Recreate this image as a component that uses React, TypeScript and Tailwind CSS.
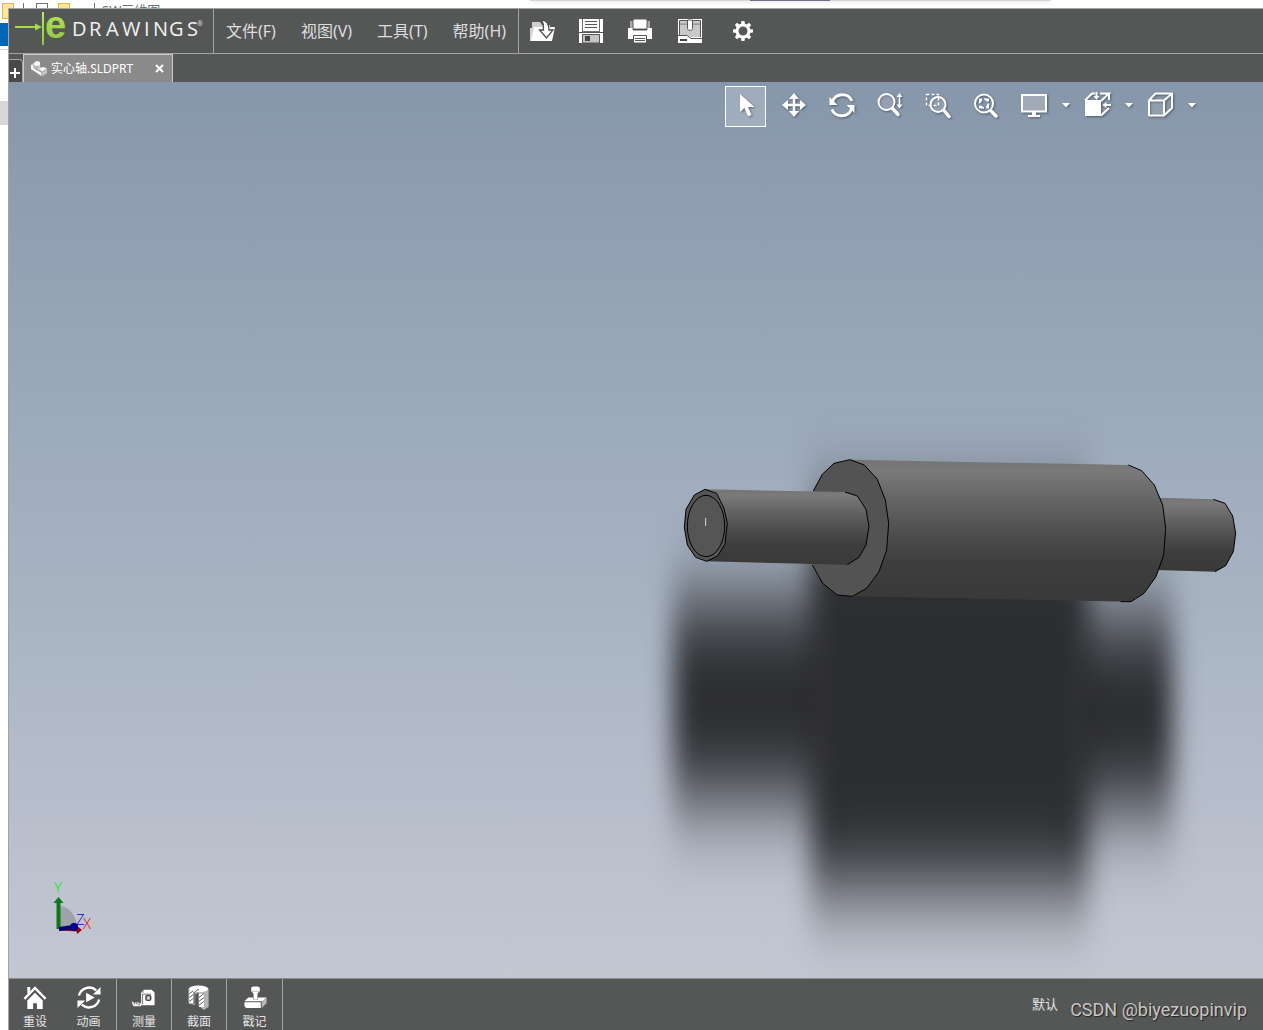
import React from 'react';
import clsx from 'clsx';

type IconProps = { className?: string };

/* ---------- header icons ---------- */

const OpenIcon = () => (
  <svg viewBox="0 0 26 24" className="w-[26px] h-6">
    <path d="M2 18V3h8l2 3h8v4" fill="#cfcfcf" />
    <path d="M1 22 4 8h21l-3 14z" fill="#fff" />
    <path d="M1 22V9" stroke="#fff" strokeWidth="1.500" />
    <path d="M11 1c6 0 8 4 8 10h4l-6.500 8-7-8h4c0-5 0-7-2.500-10z" fill="#fff" stroke="#4b4d4c" strokeWidth="1.300" />
  </svg>
);

const SaveIcon = () => (
  <svg viewBox="0 0 24 24" className="w-6 h-6">
    <path d="M0 0h24v24H0z" fill="#fff" />
    <path d="M3.500 0v12M20.500 0v12M3 12.500h18" stroke="#6c6e6d" strokeWidth="1" fill="none" />
    <path d="M6 2.500h12M6 5.500h12M6 8.500h12" stroke="#555756" strokeWidth="1" />
    <path d="M3.500 15.500h17V24h-17z" fill="#c4c4c4" stroke="#555756" strokeWidth="1" />
    <path d="M6 17h5v5H6z" fill="#444645" />
    <path d="M0 13.500h24" stroke="#555756" strokeWidth="1" />
  </svg>
);

const PrintIcon = () => (
  <svg viewBox="0 0 24 24" className="w-6 h-6">
    <path d="M2 2h20v8H2z" fill="#a9aaaa" />
    <path d="M5 0h14v10H5z" fill="#fff" stroke="#555756" strokeWidth="1" />
    <path d="M0 9h5v2h14V9h5v11H0z" fill="#fff" />
    <path d="M5 9.500v1.500h14V9.500" fill="none" stroke="#555756" />
    <path d="M5.500 16.500h13V24h-13z" fill="#fff" stroke="#555756" />
    <path d="M7 19.500h10M7 21.500h10" stroke="#555756" strokeWidth="1" />
  </svg>
);

const PackageIcon = () => (
  <svg viewBox="0 0 24 24" className="w-6 h-6">
    <path d="M0 0h24v24H0z" fill="#fff" />
    <path d="M2 2h20v2H2zM2 5.500h20V18H12l-3-2H2z" fill="#c8c8c8" />
    <path d="M1.500 17V1.500h21V18M2 5h20M0 16.500h9l4 3h11" fill="none" stroke="#555756" />
    <path d="M9.500 1v8.500c0 2.500 5 2.500 5 0V1z" fill="#fff" stroke="#555756" />
    <path d="M2 21h7" stroke="#444645" strokeWidth="2" />
  </svg>
);

const GearIcon = () => (
  <svg viewBox="0 0 22 22" className="w-[22px] h-[22px]">
    <circle cx="11" cy="11" r="6" fill="none" stroke="#fff" strokeWidth="3" />
    {[0, 45, 90, 135, 180, 225, 270, 315].map((angle) => (
      <path key={angle} d="M9.500 1h3l.5 4H9z" fill="#fff" transform={`rotate(${angle} 11 11)`} />
    ))}
  </svg>
);

/* ---------- view toolbar icons ---------- */

const CursorIcon = ({ className }: IconProps) => (
  <svg viewBox="0 0 28 28" className={className}>
    <path d="M8 3v18l4.500-4 3.500 8.500 3.500-1.500-3.500-8h6.500z" fill="#fff" />
  </svg>
);

const PanIcon = ({ className }: IconProps) => (
  <svg viewBox="0 0 28 28" className={className}>
    <path d="M14 5v18M5 14h18" stroke="#fff" strokeWidth="2.500" />
    <path d="M14 2l5 6H9zM14 26l5-6H9zM2 14l6-5v10zM26 14l-6-5v10z" fill="#fff" />
  </svg>
);

const RotateIcon = ({ className }: IconProps) => (
  <svg viewBox="0 0 28 28" className={className}>
    <path d="M4.500 10.500a10.500 10.500 0 0 1 19.500-.5M23.500 18A10.500 10.500 0 0 1 4 18.500" fill="none" stroke="#fff" strokeWidth="3" />
    <path d="M1.500 6v8h8zM26.500 22v-8h-8z" fill="#fff" />
  </svg>
);

const ZoomIcon = ({ className }: IconProps) => (
  <svg viewBox="0 0 28 28" className={className}>
    <circle cx="10.500" cy="11" r="8" fill="#ffffff2b" stroke="#fff" strokeWidth="2" />
    <path d="M16.500 17.500l5.500 6" stroke="#fff" strokeWidth="3.500" strokeLinecap="round" />
    <path d="M23.500 4v11" stroke="#fff" strokeWidth="1.500" />
    <path d="M23.500 2l3 4h-6zM23.500 17.500l3-4h-6z" fill="#fff" />
  </svg>
);

const ZoomAreaIcon = ({ className }: IconProps) => (
  <svg viewBox="0 0 28 28" className={className}>
    <path d="M2.500 3.500h12v11h-12z" fill="none" stroke="#fff" strokeWidth="1.500" strokeDasharray="3 2" />
    <circle cx="14" cy="13.500" r="7.500" fill="#ffffff2b" stroke="#fff" strokeWidth="2" />
    <path d="M20 19.500l5 6" stroke="#fff" strokeWidth="3.500" strokeLinecap="round" />
  </svg>
);

const ZoomFitIcon = ({ className }: IconProps) => (
  <svg viewBox="0 0 28 28" className={className}>
    <circle cx="12" cy="12.500" r="9" fill="none" stroke="#fff" strokeWidth="2" />
    <circle cx="12" cy="12.500" r="4.500" fill="none" stroke="#fff" strokeWidth="2" strokeDasharray="4.500 2.500" />
    <path d="M7 10.500v-3h3zM17 14.500v3h-3zM14 7.500h3v3zM10 17.500H7v-3z" fill="#fff" />
    <path d="M19 20l5 5" stroke="#fff" strokeWidth="3.500" strokeLinecap="round" />
  </svg>
);

const MonitorIcon = ({ className }: IconProps) => (
  <svg viewBox="0 0 28 28" className={className}>
    <path d="M2 4h24v16.500H2z" fill="#a0a9b5" stroke="#fff" strokeWidth="2" />
    <path d="M12 21h4v3h4v2H8v-2h4z" fill="#fff" />
  </svg>
);

const OrientationIcon = ({ className }: IconProps) => (
  <svg viewBox="0 0 28 28" className={className}>
    <path d="M2 9h16v16H2z" fill="#fff" />
    <path d="M2 9.500l7-7h3M17 2.500h9l-8 7.500M26 2v7M26 17l-8 7.500" fill="none" stroke="#fff" strokeWidth="2" />
    <path d="M13.500 1v5M28 14h-5" stroke="#fff" strokeWidth="2" />
    <path d="M10.500 5h6l-3 4zM23.500 11v6l-4-3z" fill="#fff" />
  </svg>
);

const CubeIcon = ({ className }: IconProps) => (
  <svg viewBox="0 0 28 28" className={className}>
    <path d="M3 9.500h15v15H3zM3 9.500l6.500-7H26l-8 7M26 2.500V17l-8 7.500" fill="none" stroke="#fff" strokeWidth="2" strokeLinejoin="round" />
    <path d="M4 10.500h13v13H4z" fill="#ffffff20" />
  </svg>
);

/* ---------- bottom bar icons ---------- */

const HomeIcon = () => (
  <svg viewBox="0 0 26 26" className="w-[26px] h-[26px]">
    <path d="M5 2h3v5L5 9zM13 8l8 8v9h-6v-6h-4v6H5v-9z" fill="#fff" />
    <path d="M2 14.500L13 3l11 11.500" fill="none" stroke="#fff" strokeWidth="2.500" />
  </svg>
);

const AnimateIcon = () => (
  <svg viewBox="0 0 26 26" className="w-[26px] h-[26px]">
    <path d="M2.500 11A11 11 0 0 1 20.500 5.500M23.500 15A11 11 0 0 1 5.500 20.500" fill="none" stroke="#fff" strokeWidth="2.500" />
    <path d="M25 2v8h-8zM1 24v-8h8zM10 8l9 5-9 5z" fill="#fff" />
  </svg>
);

const MeasureIcon = () => (
  <svg viewBox="0 0 26 26" className="w-[26px] h-[26px]">
    <path d="M10 8l3-3h8l3 3v13H10z" fill="#fff" />
    <path d="M10 8l3-3v3z" fill="#bbb" />
    <path d="M11.500 20V9.500h9" fill="none" stroke="#777" />
    <rect x="15" y="11" width="5" height="5" rx="1.500" fill="#ccc" stroke="#444" strokeWidth="1.500" />
    <path d="M0 17l3 1.500 3-.5 4 1v3H2l-1-2z" fill="#eee" />
    <path d="M3 18v2M5.500 18v2M8 19v2" stroke="#666" />
  </svg>
);

const SectionIcon = () => (
  <svg viewBox="0 0 26 26" className="w-[26px] h-[26px]">
    <path d="M2 4l7-3h9l5 3v19l-5 3-6-5V8l-3 2v11l-7-2z" fill="#b5b5b5" />
    <ellipse cx="12.500" cy="4" rx="10" ry="3.500" fill="#fff" />
    <path d="M3 6h4v13H3zM13 9h5v14h-5z" fill="#fff" />
    <path d="M3 9l4-3M3 13l4-3M3 17l4-3M13 13l5-4M13 17l5-4M13 21l5-4" stroke="#555" />
    <path d="M8 20V8l3-3h2M12 22V8" fill="none" stroke="#555" />
  </svg>
);

const StampIcon = () => (
  <svg viewBox="0 0 26 26" className="w-[26px] h-[26px]">
    <path d="M9 3c0-2 9-2 9 0v3l-2.500 3v6h-4V9L9 6z" fill="#fff" />
    <path d="M9 6.500h9" stroke="#bbb" />
    <path d="M6 13h5v2h5v-2h9l-4 4H2z" fill="#fff" />
    <path d="M2 18h17v6H4l-2-2z" fill="#fff" />
    <path d="M20 18l5-5v6l-5 5z" fill="#b8b8b8" />
  </svg>
);

const PartIcon = () => (
  <svg viewBox="0 0 18 17" className="w-[18px] h-[17px]">
    <path d="M1 4.500l3-1.500 2-2 4 1v4.500l2 1.500 3-1 2 2v4l-5 3.500L1 9z" fill="#c9c9c9" />
    <path d="M4 3l3-2 3 1v3L7 6 4 5zM9 9l4-2 4 2-4 2.500zM1 5l3 1v2l8 5v3L1 9z" fill="#f6f6f6" />
    <path d="M4 5.500v2.500l8 4.500v4M7 6v3M12.500 12l4-2.500" fill="none" stroke="#8a8a8a" strokeWidth=".8" />
  </svg>
);

const Logo = () => (
  <svg viewBox="0 0 194 44" className="w-[194px] h-11 overflow-visible" role="img" aria-label="eDRAWINGS">
    <defs>
      <linearGradient id="logoGreen" x1="0" y1="0" x2="0" y2="1">
        <stop offset="0" stopColor="#b9ea5a" />
        <stop offset="1" stopColor="#8cc63f" />
      </linearGradient>
    </defs>
    <path d="M0 18h22" stroke="#a5d94e" strokeWidth="2" />
    <path d="M20 14.500l7 3.500-7 3.500z" fill="#a5d94e" />
    <path d="M27 3h2v33h-2z" fill="url(#logoGreen)" />
    <text x="30" y="29" className="font-['Liberation_Sans'] text-[38px] font-bold" fill="url(#logoGreen)">e</text>
    <text x="57 74 91 107 129 138 154 172" y="27" className="font-['Open_Sans'] text-[20px]" fill="#f2f2f2">DRAWINGS</text>
    <text x="182" y="17" className="font-['Open_Sans'] text-[7px]" fill="#e0e0e0">®</text>
  </svg>
);

/* ---------- 3D scene ---------- */

const Model = () => (
  <svg
    viewBox="9 82 1254 896"
    preserveAspectRatio="xMaxYMax slice"
    className="absolute inset-0 w-full h-full"
    aria-hidden="true"
  >
    <defs>
      <linearGradient id="steel" x1="0" y1="0" x2="0" y2="1">
        <stop offset="0" stopColor="#747474" />
        <stop offset=".08" stopColor="#7a7a7a" />
        <stop offset=".25" stopColor="#686868" />
        <stop offset=".5" stopColor="#505050" />
        <stop offset=".72" stopColor="#3e3e3e" />
        <stop offset="1" stopColor="#393939" />
      </linearGradient>
      <filter id="soft" filterUnits="userSpaceOnUse" x="500" y="200" width="900" height="900" colorInterpolationFilters="sRGB">
        <feGaussianBlur stdDeviation="13 44" />
      </filter>
      <filter id="softWide" filterUnits="userSpaceOnUse" x="500" y="200" width="900" height="900" colorInterpolationFilters="sRGB">
        <feGaussianBlur stdDeviation="13 44" />
      </filter>
    </defs>
    <g fill="#2c2d30">
      <path d="M673 602H840V798H673z" filter="url(#soft)" />
      <path d="M1060 616H1173V808H1060z" filter="url(#soft)" />
      <path d="M811 510H1088V888H811z" filter="url(#softWide)" />
    </g>
    {/* shaft outlines are drawn at three units per pixel */}
    <g transform="translate(670 440) scale(.33333)" stroke="#000" strokeWidth="3" fill="none" strokeLinejoin="round">
      <path d="M1465 173L1630 178 1665 190 1688 228 1697 280 1690 335 1667 377 1635 395 1460 390z" fill="url(#steel)" stroke="none" />
      <path d="M1630 178L1665 190 1688 228 1697 280 1690 335 1667 377 1635 395" />
      <path d="M540 59L1375 75 1415 92 1453 135 1478 195 1487 265 1481 345 1458 410 1422 460 1383 485 547 469z" fill="url(#steel)" stroke="none" />
      <path d="M1375 75L1415 92 1453 135 1478 195 1487 265 1481 345 1458 410 1422 460 1383 485H1352" />
      <path
        d="M430 153L457 103 492 70 540 59 583 75 622 118 646 180 656 250 650 330 627 395 590 445 547 469 502 465 458 430 427 375"
        fill="#535353"
      />
      <path d="M105 148L525 156 562 168 588 208 597 260 588 315 567 352 532 374 110 364z" fill="url(#steel)" stroke="none" />
      <path d="M525 156L562 168 588 208 597 260 588 315 567 352 532 374" />
      <path
        d="M105 148L140 160 162 205 172 250 165 312 143 348 110 364 77 352 52 315 43 262 48 208 73 165z"
        fill="#555"
      />
      <ellipse cx="108" cy="258" rx="56" ry="92" />
      <path d="M107 234v24" stroke="#ddd" />
    </g>
  </svg>
);

const Triad = () => (
  <svg viewBox="0 0 60 60" className="w-[60px] h-[60px]" role="img" aria-label="XYZ">
    <path d="M15 28a18 22 0 0 1 17 22H15z" fill="#9fa2a8" />
    <path d="M14 51l20 1" stroke="#8b0000" strokeWidth="3" />
    <path d="M31 47l6 5-5 4z" fill="#a00000" />
    <path d="M13.500 25v26" stroke="#0a7a14" strokeWidth="4" />
    <path d="M13.500 19l5 6h-10z" fill="#0a7a14" />
    <path d="M14 51l14-2" stroke="#00007a" strokeWidth="4" />
    <circle cx="29" cy="49" r="4" fill="#00008b" />
    <g className="font-['Open_Sans'] text-[15px] font-light">
      <text x="9" y="15" fill="#00f000">Y</text>
      <text x="38" y="51" fill="#f00000">X</text>
      <text x="31" y="47" fill="#0000f0">Z</text>
    </g>
  </svg>
);

/* ---------- data ---------- */

const menus = ['文件(F)', '视图(V)', '工具(T)', '帮助(H)'];

const fileActions = [
  { label: '打开', icon: OpenIcon, width: 'w-12' },
  { label: '保存', icon: SaveIcon, width: 'w-12' },
  { label: '打印', icon: PrintIcon, width: 'w-[50px]' },
  { label: '打包', icon: PackageIcon, width: 'w-[50px]' },
  { label: '选项', icon: GearIcon, width: 'w-14' },
];

const viewTools = [
  { label: '选择', icon: CursorIcon, active: true },
  { label: '平移', icon: PanIcon },
  { label: '旋转', icon: RotateIcon },
  { label: '缩放', icon: ZoomIcon },
  { label: '局部放大', icon: ZoomAreaIcon },
  { label: '整屏显示', icon: ZoomFitIcon },
  { label: '显示', icon: MonitorIcon, menu: true },
  { label: '视图定向', icon: OrientationIcon, menu: true },
  { label: '显示样式', icon: CubeIcon, menu: true },
];

const bottomTools = [
  { label: '重设', icon: HomeIcon, box: 'w-[52px]' },
  { label: '动画', icon: AnimateIcon, box: 'w-14 border-r' },
  { label: '测量', icon: MeasureIcon, box: 'w-[55px] border-r' },
  { label: '截面', icon: SectionIcon, box: 'w-[55px] border-r' },
  { label: '戳记', icon: StampIcon, box: 'w-14 border-r' },
];

/* ---------- layout ---------- */

const DesktopTop = () => (
  <div className="relative flex h-2 items-start overflow-hidden pl-0.5 pt-[3px] text-gray-500">
    <span className="h-3 w-3 shrink-0 border border-[#e3b93c] bg-[#ffe79a]" />
    <span className="ml-[9px] h-3 w-px shrink-0 bg-gray-500" />
    <span className="ml-3 h-3 w-3 shrink-0 border border-gray-500" />
    <span className="ml-2.5 h-3 w-3 shrink-0 border border-[#e3b93c] bg-[#ffe79a]" />
    <span className="ml-6 h-3 w-px shrink-0 bg-gray-500" />
    <span className="ml-[7px] text-[13px] leading-[14px]">SW三维图</span>
    <span className="absolute left-[530px] top-0 h-px w-[520px] bg-gray-300 shadow-[0_0_4px_#aaa]" />
    <span className="absolute left-[750px] top-0 h-px w-20 bg-gray-500" />
  </div>
);

const DesktopSide = () => (
  <div className="w-2 shrink-0">
    <div className="ml-0.5 h-[11px] border-b border-l border-[#e3b93c] bg-[#ffe79a]" />
    <div className="mt-1 h-[23px] bg-[#0067b8]" />
    <div className="mt-[3px] h-px bg-gray-300" />
    <div className="mt-[51px] h-6 bg-[#d8d8d8]" />
  </div>
);

const Header = () => (
  <header className="flex h-[46px] shrink-0 border-y border-[#a3a3a3] bg-[#555756]">
    <div className="flex w-[205px] items-center border-r border-[#a3a3a3] pl-1.5">
      <Logo />
    </div>
    <nav className="flex items-center gap-px border-r border-[#a3a3a3]">
      {menus.map((menu) => (
        <button key={menu} className="h-full px-3 text-base text-[#dedede]">
          {menu}
        </button>
      ))}
    </nav>
    <div className="flex items-center">
      {fileActions.map((action) => (
        <button key={action.label} aria-label={action.label} className={clsx('flex h-full items-center justify-center', action.width)}>
          <action.icon />
        </button>
      ))}
    </div>
  </header>
);

const TabBar = () => (
  <div className="flex h-7 shrink-0 items-end bg-[#555756]">
    <button aria-label="新建标签" className="flex h-[23px] w-3.5 items-end justify-start rounded-tr border-r border-t border-[#a3a3a3] bg-[#484a49] pb-1 pl-px">
      <svg viewBox="0 0 10 10" className="h-2.5 w-2.5">
        <path d="M5 0v10M0 5h10" stroke="#fff" strokeWidth="2" />
      </svg>
    </button>
    <div className="flex h-7 w-[150px] items-center border-x border-t border-[#c8c8c8] bg-[#8a8a8a] pl-1.5 text-xs text-white">
      <PartIcon />
      <span className="ml-[3px] whitespace-nowrap">实心轴.SLDPRT</span>
      <button aria-label="关闭" className="ml-auto mr-2">
        <svg viewBox="0 0 9 9" className="h-[9px] w-[9px]">
          <path d="M1 1l7 7M8 1L1 8" stroke="#fff" strokeWidth="2" />
        </svg>
      </button>
    </div>
  </div>
);

const Viewport = () => (
  <main className="relative flex flex-1 flex-col justify-between bg-[linear-gradient(#8797ab,#9eabbb_40%,#aeb8c6_68%,#b7becb_80%,#c3c7d2)]">
    <Model />
    <div className="relative flex justify-end pr-16 pt-1">
      {viewTools.map((tool) => (
        <button
          key={tool.label}
          aria-label={tool.label}
          aria-pressed={tool.active}
          className={clsx(
            'flex h-[41px]',
            tool.menu ? 'w-[63px] pl-2.5' : 'justify-center',
            tool.active ? 'mr-1 w-[41px] border border-white bg-white/20 pt-1' : 'pt-[5px]',
            !tool.active && !tool.menu && 'w-12'
          )}
        >
          <tool.icon className="h-7 w-7 drop-shadow-[1px_1px_1px_#00000066]" />
          {tool.menu && (
            <svg viewBox="0 0 8 5" className="ml-3.5 mt-3 h-[5px] w-2 drop-shadow-[1px_1px_1px_#00000066]">
              <path d="M0 0h8L4 4.500z" fill="#fff" />
            </svg>
          )}
        </button>
      ))}
    </div>
    <div className="relative mb-10 ml-9">
      <Triad />
    </div>
  </main>
);

const BottomBar = () => (
  <footer className="flex h-[52px] shrink-0 border-t border-[#8b8d91] bg-[#555756] text-[#e4e4e4]">
    {bottomTools.map((tool) => (
      <button key={tool.label} className={clsx('flex flex-col items-center border-[#a3a3a3] pt-1.5 text-xs', tool.box)}>
        <tool.icon />
        <span className="mt-1 leading-4">{tool.label}</span>
      </button>
    ))}
    <div className="ml-auto flex items-center gap-3 pr-4">
      <span className="text-[13px]">默认</span>
      <span className="pt-2.5 font-['Roboto'] text-lg text-[#c6c6c6] [text-shadow:1px_1px_1px_#222]">CSDN @biyezuopinvip</span>
    </div>
  </footer>
);

export default function App() {
  return (
    <div className="flex min-h-screen flex-col overflow-hidden bg-white font-['Noto_Sans','Noto_Sans_CJK_SC',sans-serif]">
      <DesktopTop />
      <div className="flex flex-1">
        <DesktopSide />
        <div className="flex min-w-0 flex-1 flex-col border-l border-[#a3a3a3]">
          <Header />
          <TabBar />
          <Viewport />
          <BottomBar />
        </div>
      </div>
    </div>
  );
}
